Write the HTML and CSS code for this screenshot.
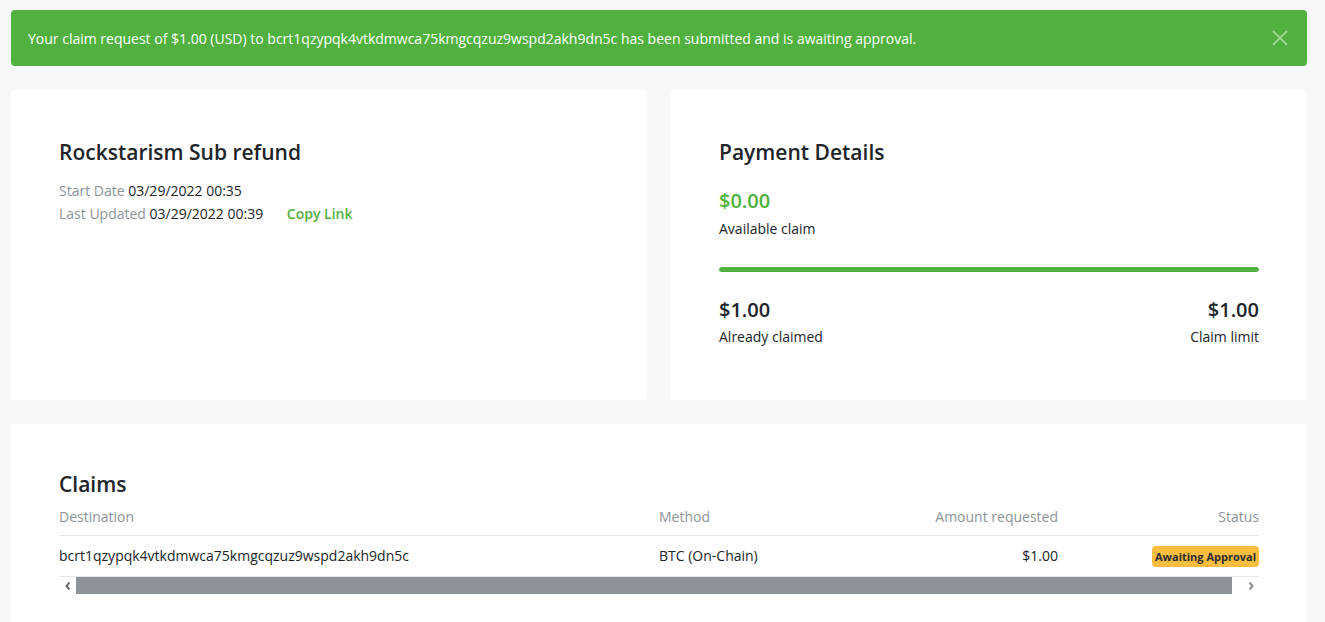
FILE: index.html
```html
<!DOCTYPE html>
<html lang="en">
<head>
<meta charset="utf-8">
<title>Pull Payment</title>
<link rel="stylesheet" href="styles.css">
</head>
<body>
<div class="page">
  <div class="alert">
    <span>Your claim request of $1.00 (USD) to bcrt1qzypqk4vtkdmwca75kmgcqzuz9wspd2akh9dn5c has been submitted and is awaiting approval.</span>
    <svg class="close" width="16" height="16" viewBox="0 0 16 16"><path d="M1 1L15 15M15 1L1 15" stroke="#ffffff" stroke-opacity="0.55" stroke-width="1.6" fill="none"/></svg>
  </div>

  <div class="cards">
    <section class="card">
      <h2 class="title">Rockstarism Sub refund</h2>
      <div class="meta">
        <div><span class="muted">Start Date</span> 03/29/2022 00:35</div>
        <div><span class="muted">Last Updated</span> 03/29/2022 00:39 <a class="copy">Copy Link</a></div>
      </div>
    </section>
    <section class="card">
      <h2 class="title">Payment Details</h2>
      <div class="available">
        <div class="amount green">$0.00</div>
        <div class="label">Available claim</div>
      </div>
      <div class="bar"><div class="fill" style="width:100%"></div></div>
      <div class="stats">
        <div>
          <div class="amount">$1.00</div>
          <div class="label">Already claimed</div>
        </div>
        <div class="right">
          <div class="amount">$1.00</div>
          <div class="label">Claim limit</div>
        </div>
      </div>
    </section>
  </div>

  <section class="card wide">
    <h2 class="title">Claims</h2>
    <div class="table">
      <div class="row head">
        <div>Destination</div>
        <div>Method</div>
        <div class="r">Amount requested</div>
        <div class="r">Status</div>
      </div>
      <div class="row body">
        <div>bcrt1qzypqk4vtkdmwca75kmgcqzuz9wspd2akh9dn5c</div>
        <div>BTC (On-Chain)</div>
        <div class="r">$1.00</div>
        <div class="r"><span class="badge">Awaiting Approval</span></div>
      </div>
    </div>
    <div class="scrollbar">
      <div class="arrow"><svg width="8" height="10" viewBox="0 0 8 10"><path d="M5.5 1.5L2.5 5L5.5 8.5" stroke="#6c7177" stroke-width="2" fill="none"/></svg></div>
      <div class="thumb"></div>
      <div class="arrow"><svg width="8" height="10" viewBox="0 0 8 10"><path d="M2.5 1.5L5.5 5L2.5 8.5" stroke="#8a8f95" stroke-width="2" fill="none"/></svg></div>
    </div>
  </section>
</div>
</body>
</html>
```

FILE: styles.css
```css
* { box-sizing: border-box; }
html, body { margin: 0; padding: 0; }
body {
  background: #f7f8fa;
  font-family: "Open Sans", "Liberation Sans", sans-serif;
  color: #212529;
  font-size: 14px;
  overflow: hidden;
}
.page {
  padding: 10px 18px 0 11px;
}
.alert {
  height: 56px;
  background: #51b13e;
  border-radius: 4px;
  color: #ffffff;
  display: flex;
  align-items: center;
  justify-content: space-between;
  padding: 0 19px 0 17px;
  font-size: 14px;
}
.close { flex: none; }
.cards {
  display: grid;
  grid-template-columns: 1fr 1fr;
  gap: 24px;
  margin-top: 24px;
}
.card {
  background: #ffffff;
  border-radius: 4px;
  padding: 50px 48px 0 48px;
  height: 310px;
}
.title {
  margin: 0;
  font-size: 21px;
  font-weight: 600;
  line-height: 25px;
  color: #212529;
}
.meta {
  margin-top: 14px;
  line-height: 23px;
  font-size: 14px;
}
.muted { color: #8d949a; }
.copy {
  color: #51b13e;
  font-weight: 600;
  margin-left: 20px;
}
.available { margin-top: 22px; }
.amount {
  font-size: 20px;
  font-weight: 600;
  line-height: 28px;
}
.green { color: #51b13e; }
.label {
  font-size: 14px;
  line-height: 22px;
  margin-top: 3px;
}
.stats .label { margin-top: 2px; }
.bar {
  margin-top: 27px;
  height: 5px;
  border-radius: 3px;
  background: #e9ecef;
  overflow: hidden;
}
.fill { height: 100%; background: #51b13e; border-radius: 3px; }
.stats {
  margin-top: 24px;
  display: flex;
  justify-content: space-between;
}
.right { text-align: right; }
.wide {
  margin-top: 24px;
  height: 260px;
  padding-top: 48px;
}
.table { margin-top: 5px; }
.row {
  display: grid;
  grid-template-columns: 600px 200px 199px 201px;
  align-items: center;
}
.row .r { text-align: right; }
.head {
  color: #8d949a;
  height: 34px;
  border-bottom: 1px solid #e5e8eb;
  padding-bottom: 5px;
}
.body {
  height: 41px;
  border-bottom: 1px solid #e5e8eb;
  padding-bottom: 1px;
}
.badge {
  display: inline-block;
  background: #fbbd3f;
  color: #2b2b2b;
  font-size: 11px;
  font-weight: 700;
  line-height: 21px;
  padding: 0 3px;
  border-radius: 4px;
  position: relative;
  top: 1px;
}
.scrollbar {
  display: flex;
  height: 17px;
  width: 1200px;
}
.arrow {
  width: 17px;
  display: flex;
  align-items: center;
  justify-content: center;
  flex: none;
}
.scrollbar .arrow:last-child { margin-left: 10px; }
.thumb {
  flex: 1;
  background: #8d9399;
}
```
